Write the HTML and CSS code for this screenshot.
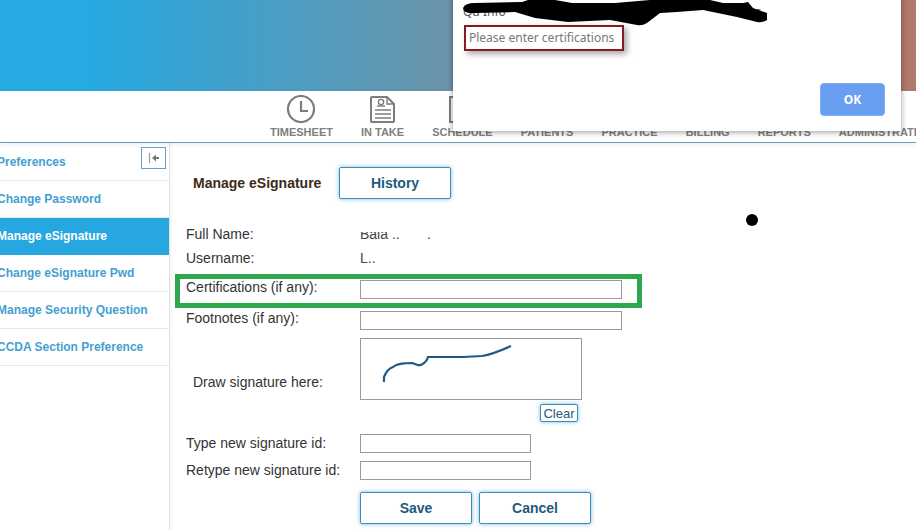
FILE: index.html
```html
<!DOCTYPE html>
<html lang="en">
<head>
<meta charset="utf-8">
<title>Manage eSignature</title>
<link rel="stylesheet" href="styles.css">
</head>
<body>
<header class="banner"></header>
<nav class="topnav">
  <div class="navitem">
    <svg class="navicon" viewBox="0 0 30 28"><circle cx="15" cy="14" r="13" fill="none" stroke="#7d7d7d" stroke-width="2.2"/><path d="M15 6v10h7" fill="none" stroke="#7d7d7d" stroke-width="2.2"/></svg>
    <span>TIMESHEET</span>
  </div>
  <div class="navitem">
    <svg class="navicon" viewBox="0 0 30 28"><path d="M4 2h15l7 7v17a1 1 0 0 1-1 1H4a1 1 0 0 1-1-1V3a1 1 0 0 1 1-1z" fill="none" stroke="#7d7d7d" stroke-width="2"/><path d="M19 2v7h7M7 15h16M7 19h16M7 23h16M9 11h8" fill="none" stroke="#7d7d7d" stroke-width="1.4"/><circle cx="13" cy="7" r="2.6" fill="none" stroke="#7d7d7d" stroke-width="1.4"/></svg>
    <span>IN TAKE</span>
  </div>
  <div class="navitem">
    <svg class="navicon" viewBox="0 0 30 28"><rect x="3" y="2" width="24" height="25" fill="none" stroke="#7d7d7d" stroke-width="2"/></svg>
    <span>SCHEDULE</span>
  </div>
  <div class="navitem"><div class="navicon"></div><span>PATIENTS</span></div>
  <div class="navitem"><div class="navicon"></div><span>PRACTICE</span></div>
  <div class="navitem"><div class="navicon"></div><span>BILLING</span></div>
  <div class="navitem"><div class="navicon"></div><span>REPORTS</span></div>
  <div class="navitem"><div class="navicon"></div><span>ADMINISTRATION</span></div>
</nav>
<div class="content">
  <aside class="sidebar">
    <a class="sideitem">Preferences</a>
    <a class="sideitem">Change Password</a>
    <a class="sideitem active">Manage eSignature</a>
    <a class="sideitem">Change eSignature Pwd</a>
    <a class="sideitem">Manage Security Question</a>
    <a class="sideitem">CCDA Section Preference</a>
    <button class="collapse" type="button" aria-label="Collapse">
      <svg viewBox="0 0 14 12" width="14" height="12"><path d="M2.5 1v10" stroke="#999" stroke-width="1.2" fill="none"/><path d="M5 6l4-3.5v2.5h3v2H9v2.5z" fill="#777"/></svg>
    </button>
  </aside>
  <main class="main">
    <div class="titlerow">
      <h1 class="title">Manage eSignature</h1>
      <button class="btn" type="button">History</button>
    </div>
    <div class="row row-name"><label class="lbl">Full Name:</label><span class="value clipped">Bala ..&nbsp;&nbsp;&nbsp;&nbsp;&nbsp;&nbsp;&nbsp;.</span></div>
    <div class="row row-name"><label class="lbl">Username:</label><span class="value">L..</span></div>
    <div class="row mt10"><label class="lbl">Certifications (if any):</label><input class="input wide" type="text"></div>
    <div class="row mt12"><label class="lbl">Footnotes (if any):</label><input class="input wide" type="text"></div>
    <div class="row mt8"><label class="lbl sign-lbl">Draw signature here:</label>
      <div class="canvas">
        <svg viewBox="0 0 220 60" width="220" height="60"><path d="M23 43v-5C25 33 29 29 32 28C37 24 44 24 51 24C55 25 57 27 60 26C64 24 66 22 67 18H102L121 17C127 16 139 12 150 7" fill="none" stroke="#1f5a85" stroke-width="2.2"/></svg>
      </div>
    </div>
    <div class="row mt4"><span class="lbl"></span><button class="btn clear" type="button">Clear</button></div>
    <div class="row mt12"><label class="lbl lbl-mid">Type new signature id:</label><input class="input short" type="text"></div>
    <div class="row mt8"><label class="lbl lbl-mid">Retype new signature id:</label><input class="input short" type="text"></div>
    <div class="row mt12"><span class="lbl"></span><div class="actions"><button class="btn" type="button">Save</button><button class="btn" type="button">Cancel</button></div></div>
  </main>
</div>

<div class="dialog">
  <p class="dialog-text">Qu Info&nbsp;&nbsp;&nbsp;&nbsp;&nbsp;&nbsp;&nbsp;&nbsp;&nbsp;&nbsp;&nbsp;&nbsp;&nbsp;&nbsp;&nbsp;&nbsp;&nbsp;&nbsp;&nbsp;&nbsp;&nbsp;&nbsp;&nbsp;&nbsp;&nbsp;&nbsp;&nbsp;&nbsp;&nbsp;&nbsp;&nbsp;&nbsp;&nbsp;&nbsp;&nbsp;&nbsp;&nbsp;&nbsp;&nbsp;&nbsp;&nbsp;&nbsp;&nbsp;&nbsp;&nbsp;&nbsp;&nbsp;&nbsp;&nbsp;&nbsp;&nbsp;&nbsp;&nbsp;&nbsp;&nbsp;&nbsp;&nbsp;&nbsp;&nbsp;&nbsp;&nbsp;&nbsp;&nbsp;&nbsp;&nbsp;&nbsp;&nbsp;&nbsp;&nbsp;&nbsp;&nbsp;&nbsp;&nbsp;&nbsp;&nbsp;&nbsp;&nbsp;ws</p>
  <div class="alertbox">Please enter certifications</div>
  <button class="okbtn" type="button">OK</button>
</div>
<svg class="scribble" viewBox="0 0 916 40" width="916" height="40"><path d="M463 8Q465 3 475 3L522 2L528 0L555 0L572 3L615 3L650 0L710 0L723 3L743 3L748 2L753 8L767 13L767 20Q762 23 757 22L737 17L703 10L677 12L660 13L647 23Q642 26 637 25L610 20L568 22L535 18L515 12L475 13Q463 14 463 8Z" fill="#000"/></svg>
<div class="greenbox"></div>
<div class="dot"></div>
</body>
</html>
```
FILE: styles.css
```css
* { box-sizing: border-box; }
html, body { margin: 0; padding: 0; }
body {
  position: relative;
  width: 916px;
  height: 530px;
  overflow: hidden;
  background: #fff;
  font-family: "Liberation Sans", Arial, sans-serif;
  color: #333;
}
.banner {
  height: 91px;
  background: linear-gradient(90deg, #27a9e1 0%, #27a9e1 10%, #6b93a9 49%, #b0796a 100%);
}
.topnav {
  display: flex;
  gap: 28px;
  height: 52px;
  padding: 4px 0 0 270px;
  border-bottom: 1px solid #6c9fb3;
  box-shadow: 0 2px 4px rgba(120, 170, 190, .15);
  white-space: nowrap;
}
.navitem {
  display: flex;
  flex-direction: column;
  align-items: center;
  flex: none;
  font-size: 11px;
  font-weight: bold;
  color: #808080;
}
.navicon { width: 30px; height: 28px; margin-bottom: 3px; flex: none; }
.content { display: flex; height: 387px; }
.sidebar {
  position: relative;
  flex: none;
  width: 170px;
  padding-top: 1px;
  border-right: 1px solid #e2e2e2;
  box-shadow: 1px 0 3px rgba(0, 0, 0, .06);
  overflow: hidden;
}
.sideitem {
  display: flex;
  align-items: center;
  height: 37px;
  margin-left: -3px;
  border-bottom: 1px solid #dfeaf0;
  font-size: 12px;
  font-weight: bold;
  color: #44a0d2;
  white-space: nowrap;
}
.sideitem.active { background: #27a7e0; color: #fff; border-bottom-color: #27a7e0; }
.collapse {
  position: absolute;
  top: 4px;
  left: 141px;
  width: 25px;
  height: 22px;
  padding: 0;
  display: flex;
  align-items: center;
  justify-content: center;
  background: #fff;
  border: 1px solid #5aa5c8;
}
.main { flex: 1; padding: 24px 0 0 16px; }
.titlerow { display: flex; align-items: center; height: 32px; margin-bottom: 23px; }
.title {
  width: 146px;
  margin: 0 0 0 7px;
  font-size: 14px;
  font-weight: bold;
  color: #3a2a1a;
  white-space: nowrap;
}
.btn {
  width: 112px;
  height: 32px;
  padding: 0;
  background: #fff;
  border: 1px solid #3f8db5;
  border-radius: 2px;
  box-shadow: 0 0 4px rgba(60, 160, 220, .7);
  font: bold 14px "Liberation Sans", Arial, sans-serif;
  color: #1f5a7a;
}
.row { display: flex; align-items: flex-start; }
.row-name { height: 24px; align-items: center; }
.mt4 { margin-top: 4px; }
.mt8 { margin-top: 8px; }
.mt10 { margin-top: 10px; }
.mt12 { margin-top: 12px; }
.lbl { flex: none; width: 174px; font-size: 14px; line-height: 14px; color: #333; }
.lbl-mid { line-height: 19px; }
.sign-lbl { padding: 37px 0 0 7px; }
.value { font-size: 14px; color: #444; white-space: nowrap; }
.clipped { clip-path: inset(6px 0 0 0); }
.input { height: 19px; padding: 0; background: #fff; border: 1px solid #a593a5; }
.wide { width: 262px; }
.short { width: 171px; }
.canvas { width: 222px; height: 62px; border: 1px solid #a593a5; }
.canvas svg { display: block; }
.clear { width: 38px; height: 18px; margin-left: 180px; font-size: 13px; font-weight: normal; }
.actions { display: flex; gap: 7px; }
.dialog {
  position: absolute;
  top: -20px;
  left: 453px;
  width: 448px;
  height: 151px;
  background: #fff;
  box-shadow: 0 1px 6px rgba(0, 0, 0, .4);
}
.dialog-text {
  position: absolute;
  top: 23px;
  left: 10px;
  margin: 0;
  font: 12px "Noto Sans", sans-serif;
  color: #555;
  white-space: nowrap;
}
.alertbox {
  position: absolute;
  top: 45px;
  left: 11px;
  width: 160px;
  height: 26px;
  padding-left: 3px;
  border: 2px solid #8b1a1f;
  box-shadow: 3px 3px 6px rgba(0, 0, 0, .35);
  font: 12px/21px "Noto Sans", sans-serif;
  color: #777;
  white-space: nowrap;
}
.okbtn {
  position: absolute;
  top: 103px;
  left: 367px;
  width: 65px;
  height: 33px;
  background: #6a9ef0;
  border: 1px solid #7fb0f0;
  border-radius: 4px;
  font: bold 12px "Noto Sans", sans-serif;
  color: #fff;
}
.scribble { position: absolute; top: 0; left: 0; pointer-events: none; }
.greenbox {
  position: absolute;
  top: 274px;
  left: 175px;
  width: 467px;
  height: 34px;
  border: 5px solid #2ea84f;
}
.dot {
  position: absolute;
  top: 214px;
  left: 746px;
  width: 12px;
  height: 12px;
  border-radius: 50%;
  background: #000;
}
```
